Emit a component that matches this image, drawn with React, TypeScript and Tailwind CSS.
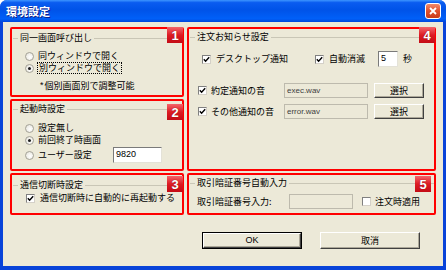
import type { ReactNode } from "react";

const Badge = ({ n, className }: { n: number; className: string }) => (
  <span
    className={`absolute flex h-[16px] w-[16px] items-center justify-center bg-[linear-gradient(to_bottom,#f4646a,#dc1c24_50%,#c40c16)] font-['Liberation_Sans',sans-serif] text-[13px] font-bold leading-none text-white [text-shadow:0_0_1px_#700] ${className}`}
  >
    {n}
  </span>
);

const Group = ({
  title,
  n,
  className,
  badge,
  children,
}: {
  title: string;
  n: number;
  className: string;
  badge: string;
  children: ReactNode;
}) => (
  <div className={`relative rounded-[2px] border-2 border-[#ff0000] ${className}`}>
    <div className="flex h-[12px] items-center">
      <span className="ml-[1px] w-[5px] border-t border-[#c9c6b6]" />
      <span className="px-[2px] leading-[12px]">{title}</span>
      <span className="flex-1 border-t border-[#c9c6b6]" />
    </div>
    {children}
    <Badge n={n} className={badge} />
  </div>
);

const Radio = ({ checked = false }: { checked?: boolean }) => (
  <span className="flex h-[9px] w-[9px] shrink-0 items-center justify-center rounded-full border border-[#a4a297] bg-[radial-gradient(circle_at_60%_60%,#ffffff,#e4e2d8)]">
    {checked && <span className="h-[3px] w-[3px] rounded-full bg-[#202020]" />}
  </span>
);

const Check = ({ checked = false }: { checked?: boolean }) => (
  <span className="flex h-[9px] w-[9px] shrink-0 items-center justify-center border border-[#808080] border-b-[#d4d0c8] border-r-[#d4d0c8] bg-white">
    {checked && (
      <svg width="7" height="7" viewBox="0 0 7 7">
        <path d="M0.8 3.2 L2.6 5.2 L6.2 1.2" fill="none" stroke="#000" strokeWidth="1.4" />
      </svg>
    )}
  </span>
);

const Field = ({ value, className }: { value?: string; className: string }) => (
  <span
    className={`flex items-center border border-[#bdbaad] bg-[#ece9d8] pl-[2px] font-['Liberation_Sans',sans-serif] text-[8px] text-[#404040] ${className}`}
  >
    {value}
  </span>
);

const Btn = ({ label, className }: { label: string; className: string }) => (
  <span
    className={`flex items-center justify-center border border-t-white border-l-white border-r-[#404040] border-b-[#404040] bg-[#ece9d8] shadow-[inset_-1px_-1px_#aca899] ${className}`}
  >
    {label}
  </span>
);

export default function App() {
  return (
    <div className="flex h-[270px] w-[446px] flex-col overflow-hidden rounded-t-[7px] bg-[#0843d9] font-['Noto_Sans_CJK_JP',sans-serif] text-[9px] text-black">
      <div className="flex h-[22px] shrink-0 items-center bg-[linear-gradient(to_bottom,#3d95ff_0%,#0a5cf0_12%,#0053e8_45%,#0060f8_85%,#0046dc_100%)] pl-[6px] pr-[5px]">
        <span className="text-[11px] font-bold text-white [text-shadow:1px_1px_#0f1e89]">環境設定</span>
        <span className="ml-auto flex h-[16px] w-[16px] items-center justify-center rounded-[3px] border border-white bg-[linear-gradient(to_bottom,#f08a6c,#e0502c_50%,#c83c1a)]">
          <svg width="8" height="8" viewBox="0 0 8 8">
            <path d="M1 1 L7 7 M7 1 L1 7" stroke="#fff" strokeWidth="1.8" />
          </svg>
        </span>
      </div>

      <div className="mx-[3px] mb-[4px] flex flex-1 flex-col bg-[#ece9d8] pl-[7px] pt-[5px]">
        <div className="flex gap-[3px]">
          <div className="flex w-[174px] flex-col gap-[2px]">
            <Group title="同一画面呼び出し" n={1} className="h-[70px] pt-[3px]" badge="-top-[2px] -right-[1px]">
              <div className="mt-[6px] flex flex-col pl-[13px]">
                <div className="flex h-[12px] items-center gap-[4px]">
                  <Radio />
                  <span>同ウィンドウで開く</span>
                </div>
                <div className="flex h-[12px] items-center gap-[3px]">
                  <Radio checked />
                  <span className="border border-dotted border-black px-[1px] leading-[10px]">別ウィンドウで開く</span>
                </div>
              </div>
              <div className="mt-[6px] flex h-[12px] items-center gap-[1px] pl-[28px]">
                <span className="font-['Liberation_Sans',sans-serif]">*</span>
                <span>個別画面別で調整可能</span>
              </div>
            </Group>

            <Group title="起動時設定" n={2} className="h-[72px] pt-[2px]" badge="top-[3px] -right-[1px]">
              <div className="mt-[7px] flex flex-col pl-[13px]">
                <div className="flex h-[12px] items-center gap-[4px]">
                  <Radio />
                  <span>設定無し</span>
                </div>
                <div className="flex h-[12px] items-center gap-[4px]">
                  <Radio checked />
                  <span>前回終了時画面</span>
                </div>
                <div className="mt-[1px] flex h-[16px] items-center">
                  <span className="flex w-[88px] items-center gap-[4px]">
                    <Radio />
                    <span>ユーザー設定</span>
                  </span>
                  <span className="flex h-[16px] w-[49px] items-center border border-[#7a7a7a] border-b-[#e4e2d8] border-r-[#e4e2d8] bg-white pl-[2px] font-['Liberation_Sans',sans-serif] text-[9px]">
                    9820
                  </span>
                </div>
              </div>
            </Group>

            <Group title="通信切断時設定" n={3} className="h-[42px] pt-[4px]" badge="top-[1px] -right-[1px]">
              <div className="mt-[1px] flex h-[12px] items-center gap-[5px] pl-[14px]">
                <Check checked />
                <span>通信切断時に自動的に再起動する</span>
              </div>
            </Group>
          </div>

          <div className="flex w-[249px] flex-col gap-[2px]">
            <Group title="注文お知らせ設定" n={4} className="h-[144px] pt-[2px]" badge="-top-[2px] -right-[1px]">
              <div className="mt-[8px] flex h-[16px] items-center pl-[13px]">
                <span className="flex w-[113px] items-center gap-[5px]">
                  <Check checked />
                  <span>デスクトップ通知</span>
                </span>
                <span className="flex w-[63px] items-center gap-[5px]">
                  <Check checked />
                  <span>自動消滅</span>
                </span>
                <span className="flex h-[16px] w-[20px] items-center border border-[#7a7a7a] border-b-[#e4e2d8] border-r-[#e4e2d8] bg-white pl-[2px] font-['Liberation_Sans',sans-serif] text-[9px]">
                  5
                </span>
                <span className="ml-[5px]">秒</span>
              </div>
              <div className="mt-[16px] flex h-[15px] items-center pl-[9px]">
                <span className="flex w-[86px] items-center gap-[4px]">
                  <Check checked />
                  <span>約定通知の音</span>
                </span>
                <Field value="exec.wav" className="h-[15px] w-[84px]" />
                <Btn label="選択" className="ml-[6px] h-[15px] w-[50px]" />
              </div>
              <div className="mt-[6px] flex h-[15px] items-center pl-[9px]">
                <span className="flex w-[86px] items-center gap-[4px]">
                  <Check checked />
                  <span>その他通知の音</span>
                </span>
                <Field value="error.wav" className="h-[15px] w-[84px]" />
                <Btn label="選択" className="ml-[6px] h-[15px] w-[50px]" />
              </div>
            </Group>

            <Group title="取引暗証番号自動入力" n={5} className="h-[42px] pt-[2px]" badge="top-[1px] right-[3px]">
              <div className="mt-[5px] flex h-[15px] items-center pl-[8px]">
                <span className="w-[92px]">取引暗証番号入力:</span>
                <Field className="h-[15px] w-[64px]" />
                <span className="ml-[9px] flex items-center gap-[4px]">
                  <Check />
                  <span>注文時適用</span>
                </span>
              </div>
            </Group>
          </div>
        </div>

        <div className="ml-[192px] mt-[17px] flex gap-[18px]">
          <span className="flex h-[17px] w-[100px] border border-black">
            <Btn label="OK" className="h-full w-full font-['Liberation_Sans',sans-serif]" />
          </span>
          <Btn label="取消" className="h-[17px] w-[100px]" />
        </div>
      </div>
    </div>
  );
}
